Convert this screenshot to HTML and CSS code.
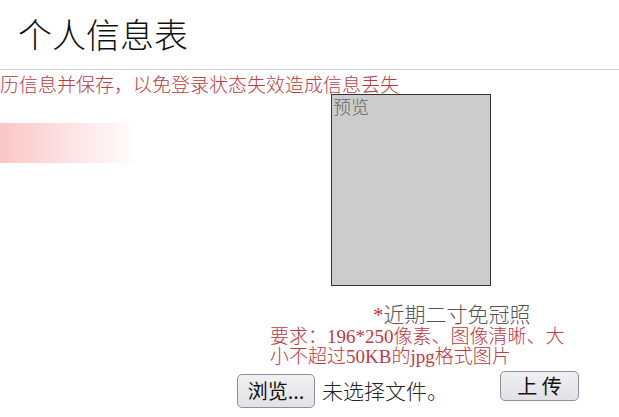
FILE: index.html
```html
<!DOCTYPE html>
<html lang="zh-CN">
<head>
<meta charset="utf-8">
<title>个人信息表</title>
<link rel="stylesheet" href="styles.css">
</head>
<body>
<header class="header">
  <h1 class="title">个人信息表</h1>
</header>
<p class="notice">历信息并保存，以免登录状态失效造成信息丢失</p>
<main class="main">
  <div class="preview">预览</div>
  <p class="caption"><span class="star">*</span>近期二寸免冠照</p>
  <p class="req">要求：196*250像素、图像清晰、大小不超过50KB的jpg格式图片</p>
  <div class="file-row">
    <button class="btn btn-browse" type="button">浏览...</button>
    <span class="file-name">未选择文件。</span>
    <button class="btn btn-upload" type="button">上 传</button>
  </div>
</main>
</body>
</html>
```
FILE: styles.css
```css
html, body {
  margin: 0;
  padding: 0;
  background: #fff;
}
body {
  width: 619px;
  height: 417px;
  overflow: hidden;
  font-family: "Liberation Serif", "Noto Sans CJK SC", serif;
  color: #333;
}
.header {
  height: 69px;
  border-bottom: 1px solid #cfcfcf;
  box-sizing: content-box;
}
.title {
  margin: 0;
  padding: 12px 0 0 18px;
  font-family: "Noto Sans CJK SC", sans-serif;
  font-weight: 300;
  font-size: 34px;
  line-height: 44px;
  color: #111;
}
.notice {
  margin: 0;
  padding: 8px 0 0 0;
  height: 16px;
  font-size: 19px;
  line-height: 16px;
  color: #c0393f;
  white-space: nowrap;
  font-weight: 300;
}
.main {
  background-image: linear-gradient(to right, #fbc6c8 0px, #fde3e4 70px, #fff 140px);
  background-size: 331px 40px;
  background-position: 0 29px;
  background-repeat: no-repeat;
  min-height: 323px;
}
.preview {
  margin-left: 331px;
  width: 157px;
  height: 190px;
  border: 1px solid #333;
  background: #cccccc;
  font-family: "Noto Sans CJK SC", sans-serif;
  font-weight: 300;
  font-size: 18px;
  line-height: 22px;
  color: #666;
  padding-left: 1px;
  box-sizing: content-box;
}
.caption {
  margin: 17px 0 0 373px;
  font-size: 21px;
  line-height: 24px;
  color: #555;
  font-weight: 300;
}
.star {
  color: #c0393f;
}
.req {
  margin: 0 0 0 270px;
  width: 300px;
  font-size: 19px;
  line-height: 20px;
  color: #c0393f;
  font-weight: 300;
}
.file-row {
  display: flex;
  align-items: flex-start;
  margin: 4px 0 0 237px;
}
.btn {
  font-family: "Noto Sans CJK SC", sans-serif;
  font-size: 20px;
  color: #111;
  background: linear-gradient(#f0f0f2, #e2e2e6);
  border: 1px solid #8f8f9d;
  border-radius: 5px;
  padding: 0;
  box-sizing: border-box;
}
.btn-browse {
  width: 78px;
  height: 34px;
  margin-top: 3px;
  line-height: 30px;
}
.file-name {
  margin: 5px 0 0 7px;
  width: 178px;
  font-family: "Noto Sans CJK SC", sans-serif;
  font-weight: 300;
  font-size: 21px;
  line-height: 28px;
  color: #222;
}
.btn-upload {
  width: 79px;
  height: 30px;
  line-height: 26px;
}
```
